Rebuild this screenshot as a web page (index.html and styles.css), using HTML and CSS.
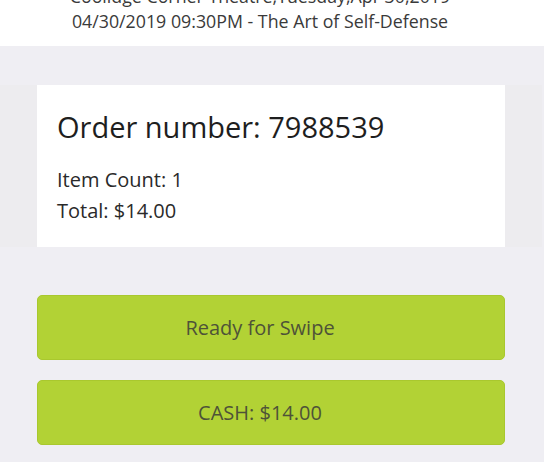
FILE: index.html
```html
<!DOCTYPE html>
<html>
<head>
<meta charset="utf-8">
<link rel="stylesheet" href="styles.css">
</head>
<body>
<header class="event">
  <div class="event-line">Coolidge Corner Theatre,Tuesday,Apr 30,2019</div>
  <div class="event-line">04/30/2019 09:30PM - The Art of Self-Defense</div>
</header>
<main class="content">
  <section class="band">
    <div class="card">
      <h1 class="order-title">Order number: 7988539</h1>
      <div class="order-line">Item Count: 1</div>
      <div class="order-line">Total: $14.00</div>
    </div>
  </section>
  <div class="actions">
    <button class="action">Ready for Swipe</button>
    <button class="action">CASH: $14.00</button>
  </div>
</main>
</body>
</html>
```
FILE: styles.css
```css
html, body {
  margin: 0;
  padding: 0;
}
body {
  width: 544px;
  height: 462px;
  overflow: hidden;
  background: #efeef3;
  font-family: "Open Sans", "Noto Sans", sans-serif;
  color: #222;
}
.event {
  background: #fff;
  height: 46px;
  overflow: hidden;
  display: flex;
  flex-direction: column;
  justify-content: flex-end;
  align-items: center;
  padding-right: 24px;
}
.event-line {
  font-size: 17.8px;
  line-height: 25px;
  color: #3a3a3a;
  white-space: nowrap;
  transform: translateY(-12px);
}
.content {
  padding-top: 39px;
}
.band {
  background: #edecef;
  padding: 0 37px 0 37px;
  margin: 0 2px 0 0;
}
.card {
  background: #fff;
  height: 162px;
  box-sizing: border-box;
  padding: 24px 20px 0 20px;
}
.order-title {
  margin: 0 0 19px 0;
  font-weight: 400;
  font-size: 29px;
  line-height: 36px;
  color: #1e1e1e;
}
.order-line {
  font-size: 20px;
  line-height: 31px;
  color: #2a2a2a;
}
.actions {
  display: flex;
  flex-direction: column;
  gap: 20px;
  padding: 48px 39px 0 37px;
}
.action {
  height: 65px;
  border: 1px solid #a9c82e;
  border-radius: 5px;
  background: #b2d235;
  font-family: "Open Sans", "Noto Sans", sans-serif;
  font-size: 20px;
  color: #4e5238;
  padding: 0 22px 0 0;
}
```
